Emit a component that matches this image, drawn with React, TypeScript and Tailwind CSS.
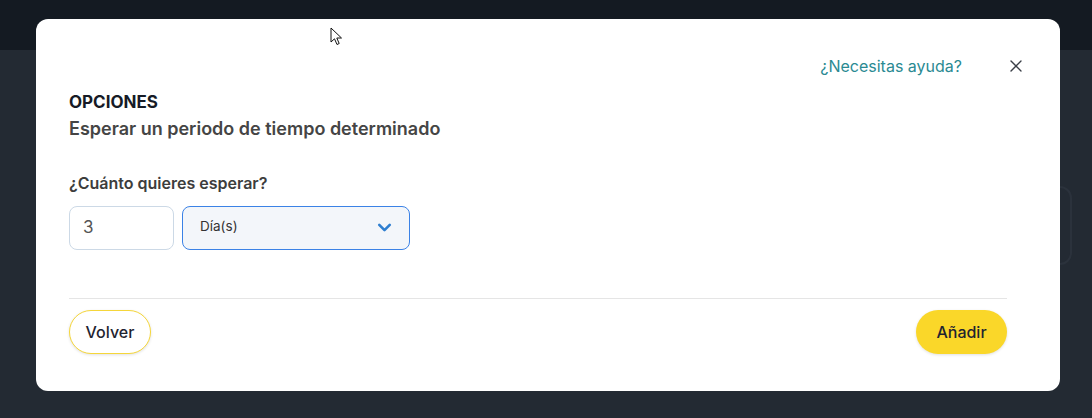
import { X, ChevronDown } from "lucide-react";

export default function App() {
  return (
    <div
      className="relative w-[1092px] h-[418px] overflow-hidden bg-[#232a33]"
      style={{ fontFamily: "Inter, 'Noto Sans', sans-serif" }}
    >
      {/* page behind the dialog */}
      <div className="h-[50px] bg-[#141a22]" />
      <div className="flex justify-end pr-[20px] pt-[136px]">
        <div className="w-[600px] h-[79px] rounded-xl border-2 border-[#2b323c]" />
      </div>

      {/* dialog */}
      <div className="absolute left-[36px] top-[19px] w-[1024px] h-[372px] rounded-xl bg-white pl-[33px] pr-[53px] pt-[35px]">
        <div className="flex items-center justify-end h-[24px] -mr-[19px]">
          <a className="text-[16px] text-[#2a8a92]">¿Necesitas ayuda?</a>
          <button className="ml-[44px] text-[#3a3f47]">
            <X size={20} strokeWidth={1.6} />
          </button>
        </div>

        <h2 className="mt-[12px] text-[17px] leading-[24px] font-bold text-[#161b26]">OPCIONES</h2>
        <p className="mt-[3px] text-[18px] leading-[24px] font-semibold text-[#454545]">
          Esperar un periodo de tiempo determinado
        </p>

        <label className="block mt-[31px] text-[16px] leading-[22px] font-semibold text-[#3d3d3d]">
          ¿Cuánto quieres esperar?
        </label>
        <div className="mt-[12px] flex gap-[8px]">
          <div className="w-[105px] h-[44px] rounded-lg border border-[#ccd9e6] flex items-center pl-[13px] text-[17px] text-[#555]">
            3
          </div>
          <div className="w-[228px] h-[44px] rounded-lg border border-[#3b82e6] bg-[#f3f6fa] flex justify-between pl-[17px] pr-[14px]">
            <span className="pt-[9px] text-[13.5px] text-[#333]">Día(s)</span>
            <ChevronDown size={21} strokeWidth={3} className="mt-[10px] text-[#2f7fd0]" />
          </div>
        </div>

        <div className="mt-[48px] h-px bg-[#e5e5e5]" />

        <div className="mt-[11px] flex justify-between">
          <button className="h-[44px] w-[82px] rounded-full border border-[#f5d63a] bg-white shadow-[0_1px_3px_rgba(0,0,0,0.12)] text-[16px] font-medium text-[#1f2430]">
            Volver
          </button>
          <button className="h-[44px] w-[91px] rounded-full bg-[#fad729] shadow-[0_1px_3px_rgba(0,0,0,0.12)] text-[16px] font-medium text-[#1f2430]">
            Añadir
          </button>
        </div>
      </div>

      {/* mouse pointer */}
      <svg className="absolute left-[330px] top-[27px]" width="14" height="20" viewBox="0 0 14 20">
        <path
          d="M1 1 L1 15 L4.5 11.8 L7 17.5 L9.2 16.5 L6.8 11 L11.5 11 Z"
          fill="white"
          stroke="#111"
          strokeWidth="1"
          strokeLinejoin="round"
        />
      </svg>
    </div>
  );
}
